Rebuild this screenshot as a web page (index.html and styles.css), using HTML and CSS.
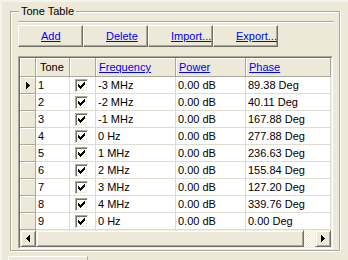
FILE: index.html
```html
<!DOCTYPE html>
<html>
<head>
<meta charset="utf-8">
<link rel="stylesheet" href="styles.css">
</head>
<body>
<div class="win">
  <div class="group">
    <div class="title">Tone Table</div>
    <div class="toolbar">
      <span class="tb">Add</span>
      <span class="tb">Delete</span>
      <span class="tb">Import...</span>
      <span class="tb">Export...</span>
    </div>
    <div class="grid">
      <div class="grid-in">
        <div class="row head">
          <div class="c h"></div>
          <div class="c h tone">Tone</div>
          <div class="c h"></div>
          <div class="c h"><span class="link">Frequency</span></div>
          <div class="c h"><span class="link">Power</span></div>
          <div class="c h"><span class="link">Phase</span></div>
        </div>
        <div class="row">
          <div class="c rh"><svg class="ind" width="4" height="7" viewBox="0 0 4 7"><path d="M0 0h1v7h-1z M1 1h1v5h-1z M2 2h1v3h-1z M3 3h1v1h-1z"/></svg></div>
          <div class="c">1</div>
          <div class="c ck"><span class="box"><svg width="7" height="7" viewBox="0 0 7 7"><path d="M0 2h1v3h-1z M1 3h1v3h-1z M2 4h1v3h-1z M3 3h1v3h-1z M4 2h1v3h-1z M5 1h1v3h-1z M6 0h1v3h-1z"/></svg></span></div>
          <div class="c">-3 MHz</div>
          <div class="c">0.00 dB</div>
          <div class="c">89.38 Deg</div>
        </div>
        <div class="row">
          <div class="c rh"></div>
          <div class="c">2</div>
          <div class="c ck"><span class="box"><svg width="7" height="7" viewBox="0 0 7 7"><path d="M0 2h1v3h-1z M1 3h1v3h-1z M2 4h1v3h-1z M3 3h1v3h-1z M4 2h1v3h-1z M5 1h1v3h-1z M6 0h1v3h-1z"/></svg></span></div>
          <div class="c">-2 MHz</div>
          <div class="c">0.00 dB</div>
          <div class="c">40.11 Deg</div>
        </div>
        <div class="row">
          <div class="c rh"></div>
          <div class="c">3</div>
          <div class="c ck"><span class="box"><svg width="7" height="7" viewBox="0 0 7 7"><path d="M0 2h1v3h-1z M1 3h1v3h-1z M2 4h1v3h-1z M3 3h1v3h-1z M4 2h1v3h-1z M5 1h1v3h-1z M6 0h1v3h-1z"/></svg></span></div>
          <div class="c">-1 MHz</div>
          <div class="c">0.00 dB</div>
          <div class="c">167.88 Deg</div>
        </div>
        <div class="row">
          <div class="c rh"></div>
          <div class="c">4</div>
          <div class="c ck"><span class="box"><svg width="7" height="7" viewBox="0 0 7 7"><path d="M0 2h1v3h-1z M1 3h1v3h-1z M2 4h1v3h-1z M3 3h1v3h-1z M4 2h1v3h-1z M5 1h1v3h-1z M6 0h1v3h-1z"/></svg></span></div>
          <div class="c">0 Hz</div>
          <div class="c">0.00 dB</div>
          <div class="c">277.88 Deg</div>
        </div>
        <div class="row">
          <div class="c rh"></div>
          <div class="c">5</div>
          <div class="c ck"><span class="box"><svg width="7" height="7" viewBox="0 0 7 7"><path d="M0 2h1v3h-1z M1 3h1v3h-1z M2 4h1v3h-1z M3 3h1v3h-1z M4 2h1v3h-1z M5 1h1v3h-1z M6 0h1v3h-1z"/></svg></span></div>
          <div class="c">1 MHz</div>
          <div class="c">0.00 dB</div>
          <div class="c">236.63 Deg</div>
        </div>
        <div class="row">
          <div class="c rh"></div>
          <div class="c">6</div>
          <div class="c ck"><span class="box"><svg width="7" height="7" viewBox="0 0 7 7"><path d="M0 2h1v3h-1z M1 3h1v3h-1z M2 4h1v3h-1z M3 3h1v3h-1z M4 2h1v3h-1z M5 1h1v3h-1z M6 0h1v3h-1z"/></svg></span></div>
          <div class="c">2 MHz</div>
          <div class="c">0.00 dB</div>
          <div class="c">155.84 Deg</div>
        </div>
        <div class="row">
          <div class="c rh"></div>
          <div class="c">7</div>
          <div class="c ck"><span class="box"><svg width="7" height="7" viewBox="0 0 7 7"><path d="M0 2h1v3h-1z M1 3h1v3h-1z M2 4h1v3h-1z M3 3h1v3h-1z M4 2h1v3h-1z M5 1h1v3h-1z M6 0h1v3h-1z"/></svg></span></div>
          <div class="c">3 MHz</div>
          <div class="c">0.00 dB</div>
          <div class="c">127.20 Deg</div>
        </div>
        <div class="row">
          <div class="c rh"></div>
          <div class="c">8</div>
          <div class="c ck"><span class="box"><svg width="7" height="7" viewBox="0 0 7 7"><path d="M0 2h1v3h-1z M1 3h1v3h-1z M2 4h1v3h-1z M3 3h1v3h-1z M4 2h1v3h-1z M5 1h1v3h-1z M6 0h1v3h-1z"/></svg></span></div>
          <div class="c">4 MHz</div>
          <div class="c">0.00 dB</div>
          <div class="c">339.76 Deg</div>
        </div>
        <div class="row">
          <div class="c rh"></div>
          <div class="c">9</div>
          <div class="c ck"><span class="box"><svg width="7" height="7" viewBox="0 0 7 7"><path d="M0 2h1v3h-1z M1 3h1v3h-1z M2 4h1v3h-1z M3 3h1v3h-1z M4 2h1v3h-1z M5 1h1v3h-1z M6 0h1v3h-1z"/></svg></span></div>
          <div class="c">0 Hz</div>
          <div class="c">0.00 dB</div>
          <div class="c">0.00 Deg</div>
        </div>
        <div class="hscroll">
          <span class="sbtn"><svg width="4" height="7" viewBox="0 0 4 7"><path d="M3 0h1v7h-1z M2 1h1v5h-1z M1 2h1v3h-1z M0 3h1v1h-1z"/></svg></span>
          <span class="thumb"></span>
          <span class="track"></span>
          <span class="sbtn"><svg width="4" height="7" viewBox="0 0 4 7"><path d="M0 0h1v7h-1z M1 1h1v5h-1z M2 2h1v3h-1z M3 3h1v1h-1z"/></svg></span>
        </div>
      </div>
    </div>
  </div>
  <div class="tab"></div>
</div>
</body>
</html>
```

FILE: styles.css
```css
html, body {
  margin: 0;
  padding: 0;
}
body {
  background: #ECE9D8;
  font-family: "Liberation Sans", Arial, sans-serif;
  font-size: 11px;
  line-height: 13px;
  color: #000;
  width: 348px;
  height: 260px;
  overflow: hidden;
}
.win {
  height: 260px;
  box-sizing: border-box;
  padding-top: 11px;
  box-shadow: inset 0 2px #F4F3EE, inset 2px 0 #F4F3EE;
  overflow: hidden;
}
.group {
  margin-left: 10px;
  width: 330px;
  height: 240px;
  box-sizing: border-box;
  border: 1px solid #ACA899;
  box-shadow: inset 1px 1px #fff, 1px 1px #fff;
  padding: 0 5px 0 7px;
}
.title {
  width: max-content;
  margin: -7px 0 0 1px;
  padding: 0 2px;
  background: #ECE9D8;
  line-height: 13px;
}
.toolbar {
  margin-top: 3px;
  border-top: 1px solid #ACA899;
  box-shadow: inset 0 1px #fff;
  padding-top: 3px;
  display: flex;
}
.tb {
  width: 65px;
  height: 22px;
  box-sizing: border-box;
  border: 1px solid;
  border-color: #fff #716F64 #716F64 #fff;
  box-shadow: inset -1px -1px #ACA899;
  padding-left: 22px;
  line-height: 20px;
  color: #00f;
  text-decoration: underline;
}
.grid {
  margin-top: 9px;
  width: 315px;
  box-sizing: border-box;
  border: 1px solid;
  border-color: #ACA899 #fff #fff #ACA899;
}
.grid-in {
  border: 1px solid;
  border-color: #716F64 #F1EFE2 #F1EFE2 #716F64;
  background: #fff;
}
.row {
  display: grid;
  grid-template-columns: 16px 34px 26px 80px 70px 85px;
  height: 17px;
}
.row.head {
  height: 19px;
}
.c {
  box-sizing: border-box;
  border-right: 1px solid #DEDBD0;
  border-bottom: 1px solid #DEDBD0;
  padding-left: 2px;
  line-height: 16px;
  white-space: nowrap;
  overflow: hidden;
}
.c.h {
  background: #ECE9D8;
  border-color: #ACA899;
  box-shadow: inset 1px 1px #fff;
  padding-left: 3px;
  line-height: 18px;
}
.c.h.tone {
  padding-left: 4px;
}
.link {
  color: #00f;
  text-decoration: underline;
}
.c.rh {
  background: #ECE9D8;
  border-right-color: #ACA899;
  border-bottom-color: #ACA899;
  box-shadow: inset 1px 1px #fff;
  padding: 0;
  display: flex;
  align-items: center;
  justify-content: center;
}
.ind {
  display: block;
  fill: #000;
  shape-rendering: crispEdges;
}
.c.ck {
  padding-left: 5px;
  display: flex;
  align-items: center;
}
.box {
  width: 13px;
  height: 13px;
  box-sizing: border-box;
  border: 1px solid;
  border-color: #ACA899 #fff #fff #ACA899;
  box-shadow: inset 1px 1px #716F64, inset -1px -1px #F1EFE2;
  background: #fff;
  display: flex;
  align-items: center;
  justify-content: center;
}
.box svg {
  display: block;
  fill: #000;
  shape-rendering: crispEdges;
}
.hscroll {
  display: flex;
  height: 17px;
}
.sbtn, .thumb {
  height: 17px;
  box-sizing: border-box;
  border: 1px solid;
  border-color: #F1EFE2 #716F64 #716F64 #F1EFE2;
  box-shadow: inset 1px 1px #fff, inset -1px -1px #ACA899;
  background: #ECE9D8;
}
.sbtn {
  width: 16px;
  display: flex;
  align-items: center;
  justify-content: center;
}
.sbtn svg {
  display: block;
  fill: #000;
  shape-rendering: crispEdges;
}
.thumb {
  width: 268px;
}
.track {
  flex: 1;
  background: repeating-conic-gradient(#fff 0 25%, #ECE9D8 0 50%) 0 0 / 2px 2px;
}
.tab {
  margin: 5px 0 0 8px;
  width: 80px;
  height: 10px;
  box-sizing: border-box;
  border-top: 1px solid #fff;
  border-left: 1px solid #fff;
  border-right: 1px solid #ACA899;
}
```
